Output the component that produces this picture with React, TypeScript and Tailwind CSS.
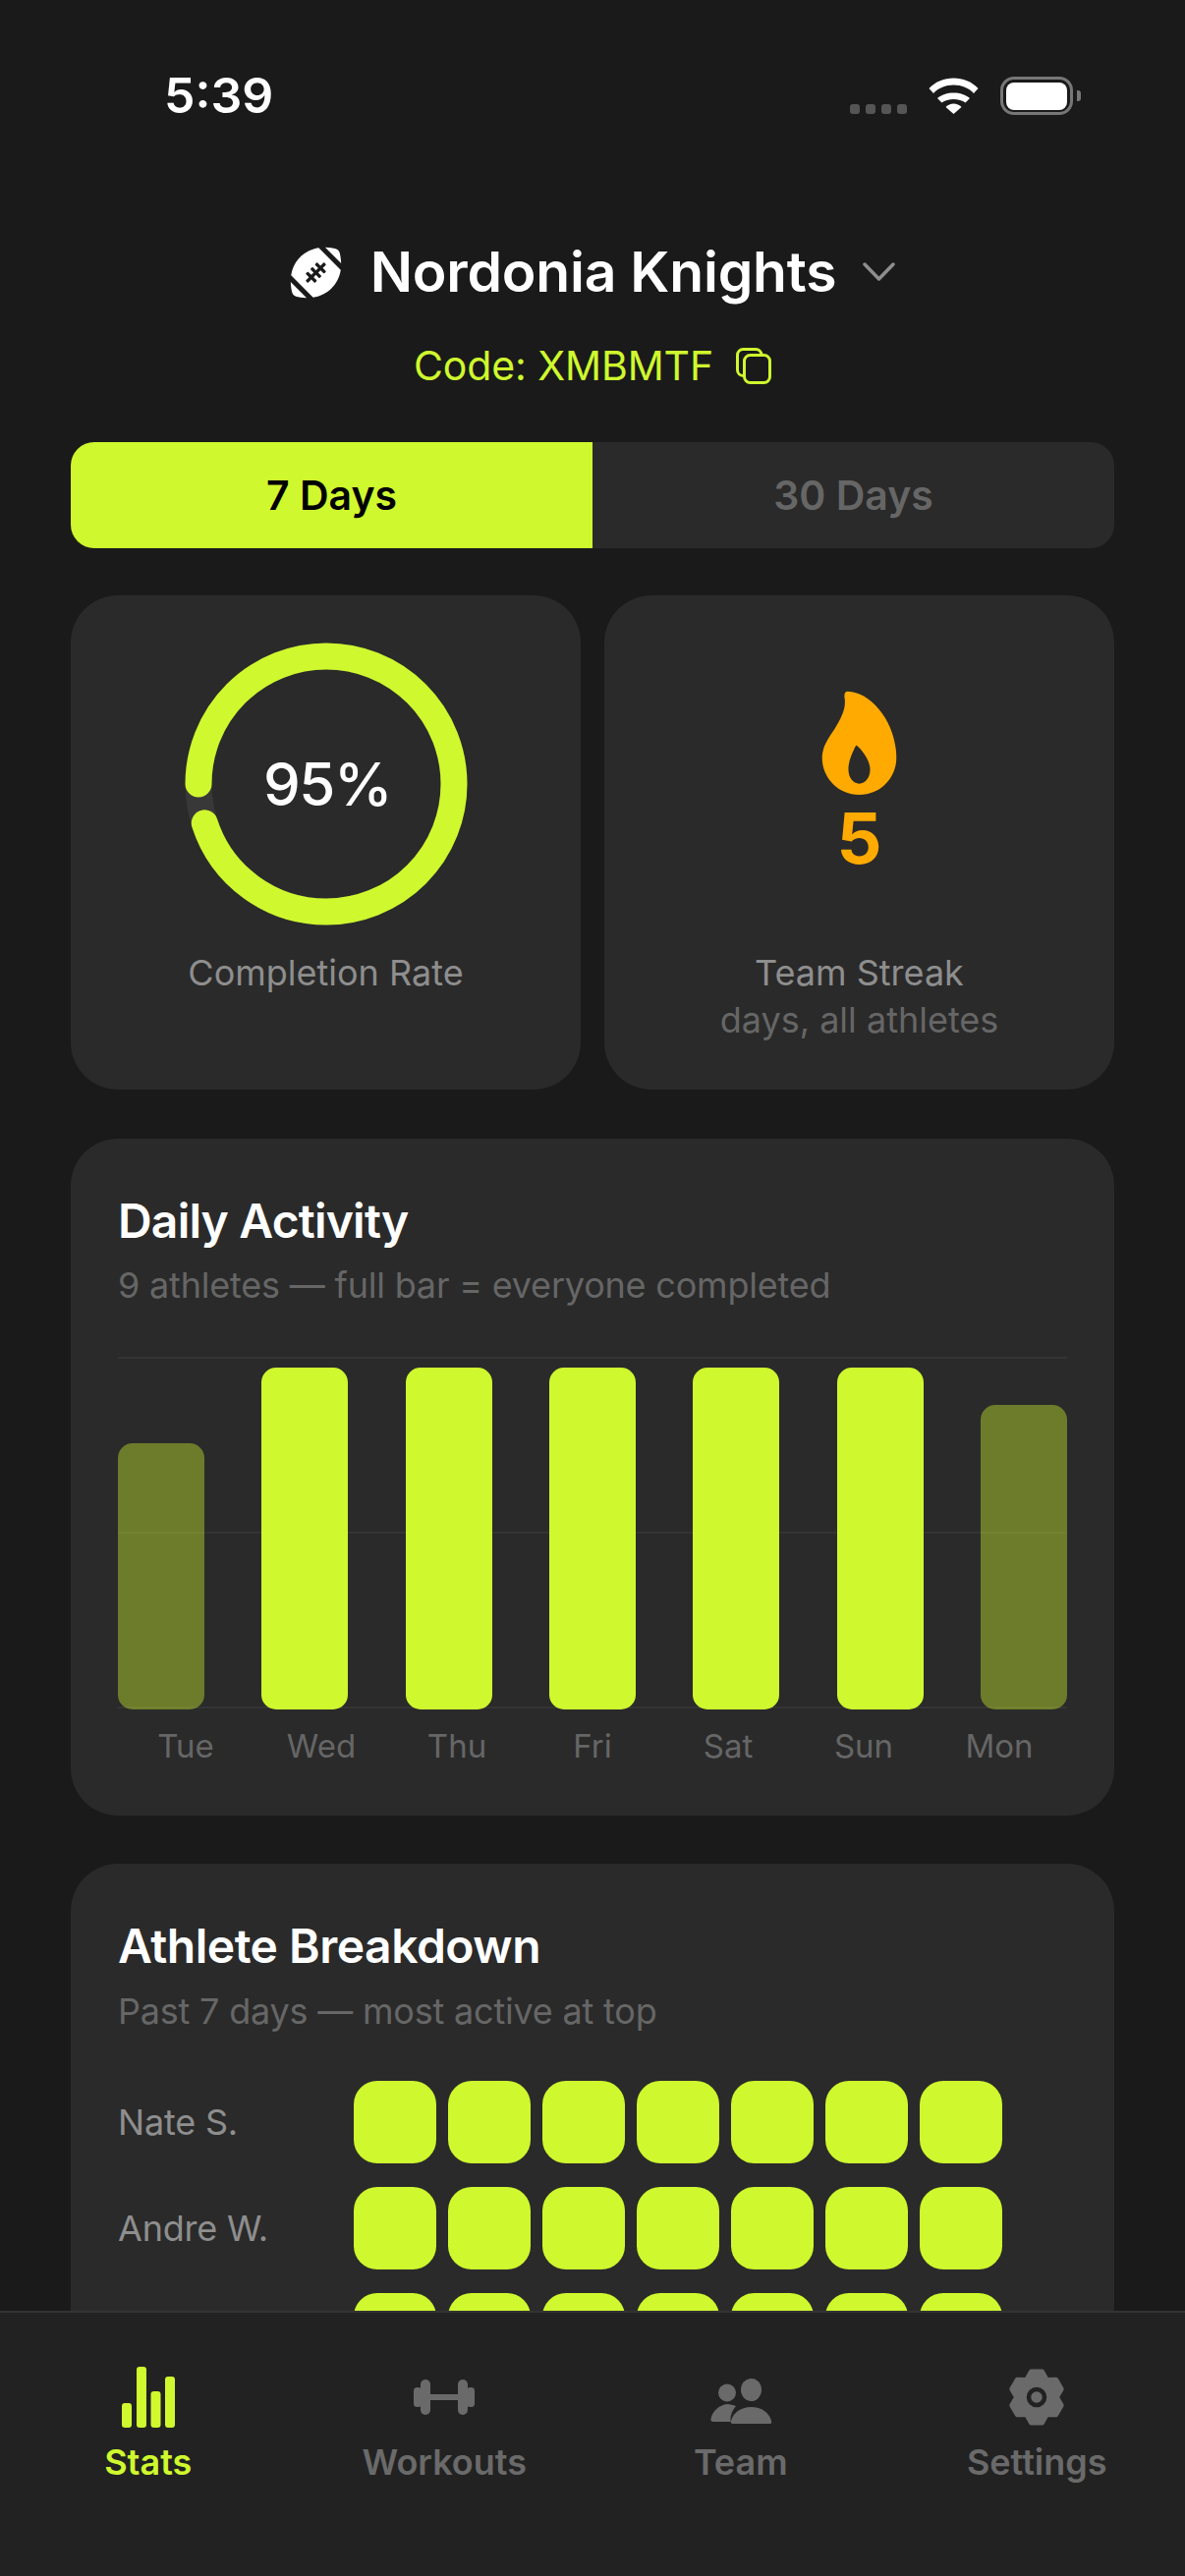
import { FaFootballBall } from 'react-icons/fa';

const days = ['Tue', 'Wed', 'Thu', 'Fri', 'Sat', 'Sun', 'Mon'];
const athletes = ['Nate S.', 'Andre W.', ''];

const gearPoints = Array.from({ length: 6 }).flatMap((_, i) => {
    const a = (i * 60 - 90) * (Math.PI / 180);
    const at = (r: number, d: number) => {
        const t = a + (d * Math.PI) / 180;
        return `${(30 + r * Math.cos(t)).toFixed(2)},${(30 + r * Math.sin(t)).toFixed(2)}`;
    };
    return [at(20.5, -29), at(26.5, -12), at(26.5, 12), at(20.5, 29)];
}).join(' ');

const StatusBar = () => (
    <div className="flex h-[195px] shrink-0 items-center justify-between pl-[167px] pr-[114px]">
        <span className="text-[50px] leading-[61px] font-semibold text-white">5:39</span>
        <div className="flex items-center">
            <div className="mt-[27px] flex gap-[6px]">
                {[0, 1, 2, 3].map((i) => (
                    <span key={i} className="h-[10px] w-[10px] rounded-[3px] bg-[#555555]" />
                ))}
            </div>
            <svg className="ml-[22px]" width="51" height="37" viewBox="0 0 51 37" fill="#ffffff">
                <path d="M0.5 11C7 4 16 0.5 25.5 0.5C35 0.5 44 4 50.5 11L46 16C41 10.5 33.5 7.5 25.5 7.5C17.5 7.5 10 10.5 5 16Z" />
                <path d="M9 21C13 17.5 19 15.5 25.5 15.5C32 15.5 38 17.5 42 21L37.5 25.5C34.5 23.5 30 22 25.5 22C21 22 16.5 23.5 13.5 25.5Z" />
                <path d="M17.5 30C19.5 28 22.5 26.5 25.5 26.5C28.5 26.5 31.5 28 33.5 30L25.5 37Z" />
            </svg>
            <div className="relative ml-[22px] flex h-[39px] w-[74px] items-center justify-center rounded-[14px] border-[3px] border-[#777777]">
                <div className="h-[28px] w-[62px] rounded-[8px] bg-white" />
                <div className="absolute right-[-11px] h-[11px] w-[4px] rounded-r-[3px] bg-[#777777]" />
            </div>
        </div>
    </div>
);

const CopyIcon = () => (
    <svg width="36" height="37" viewBox="0 0 36 37" fill="none" stroke="#cff82e" strokeWidth="3">
        <rect x="8.5" y="7.5" width="26" height="28" rx="6" />
        <path d="M8.5 28.5H7.5C4 28.5 1.5 26 1.5 22.5V7.5C1.5 4 4 1.5 7.5 1.5H20C23.5 1.5 26 4 26 7.5" />
    </svg>
);

const Ring = () => (
    <div className="relative h-[288px] w-[288px]">
        <svg width="288" height="288" viewBox="0 0 288 288" className="rotate-180">
            <circle cx="144" cy="144" r="130" fill="none" stroke="#383838" strokeWidth="27" />
            <circle
                cx="144"
                cy="144"
                r="130"
                fill="none"
                stroke="#cff82e"
                strokeWidth="27"
                strokeLinecap="round"
                strokeDasharray="776 817"
            />
        </svg>
        <div className="absolute inset-0 flex items-center justify-center pl-[3px] text-[60px] font-medium tracking-[-1.5px] text-white">95%</div>
    </div>
);

const Flame = () => (
    <svg width="77" height="107" viewBox="110 68 230 320" fill="#ffaa00">
        <path
            fillRule="evenodd"
            d="M190 70C180 70 178 80 181 95C184 125 170 150 150 185C130 215 112 240 112 272C112 335 163 385 225 385C288 385 338 335 338 272C338 165 262 72 190 70ZM215 235C222 235 258 275 258 308C258 333 243 351 225 351C207 351 192 333 192 308C192 280 207 250 215 235Z"
        />
    </svg>
);

const DailyActivity = () => (
    <section className="mt-[50px] h-[689px] shrink-0 rounded-[48px] bg-[#2a2a2a] px-[48px] pt-[54px]">
        <h2 className="text-[48px] leading-[60px] font-semibold tracking-[-0.8px] text-white">Daily Activity</h2>
        <p className="mt-[13px] text-[36px] leading-[44px] tracking-[-0.2px] text-[#666666]">9 athletes — full bar = everyone completed</p>
        <div className="relative mt-[51px] h-[359px]">
            <div className="absolute inset-x-0 top-0 flex h-[358px] flex-col justify-between">
                <div className="h-[2px] bg-[#343434]" />
                <div className="h-[2px] bg-[#343434]" />
                <div className="h-[2px] bg-[#343434]" />
            </div>
            <div className="absolute inset-x-0 bottom-0 flex h-[348px] items-end justify-between">
                {days.map((day, i) => (
                    <div
                        key={day}
                        className={
                            i === 0
                                ? 'h-[271px] w-[88px] rounded-[15px] bg-[#cff82e]/40'
                                : i === 6
                                  ? 'h-[310px] w-[88px] rounded-[15px] bg-[#cff82e]/40'
                                  : 'h-[348px] w-[88px] rounded-[15px] bg-[#cff82e]'
                        }
                    />
                ))}
            </div>
        </div>
        <div className="mt-[17px] flex">
            {days.map((day) => (
                <span key={day} className="flex-1 text-center text-[33px] leading-[40px] text-[#666666]">
                    {day}
                </span>
            ))}
        </div>
    </section>
);

const AthleteBreakdown = () => (
    <section className="mt-[49px] h-[800px] shrink-0 rounded-t-[48px] bg-[#2a2a2a] px-[48px] pt-[54px]">
        <h2 className="text-[48px] leading-[60px] font-semibold tracking-[-0.5px] text-white">Athlete Breakdown</h2>
        <p className="mt-[14px] text-[36px] leading-[44px] tracking-[-0.2px] text-[#666666]">Past 7 days — most active at top</p>
        <div className="mt-[49px] flex flex-col gap-[24px]">
            {athletes.map((name, row) => (
                <div key={row} className="flex items-center">
                    <span className="w-[240px] text-[36px] leading-[44px] tracking-[-0.2px] text-[#8e8e8e]">{name}</span>
                    <div className="flex gap-[12px]">
                        {days.map((day) => (
                            <div key={day} className="h-[84px] w-[84px] rounded-[24px] bg-[#cff82e]" />
                        ))}
                    </div>
                </div>
            ))}
        </div>
    </section>
);

const StatsIcon = () => (
    <svg width="54" height="62" viewBox="0 0 54 62" fill="#cff82e">
        <rect x="0" y="37" width="10" height="25" rx="3" />
        <rect x="15" y="0" width="10" height="62" rx="3" />
        <rect x="29.5" y="25" width="10" height="37" rx="3" />
        <rect x="44" y="10" width="10" height="52" rx="3" />
    </svg>
);

const DumbbellIcon = () => (
    <svg width="62" height="36" viewBox="0 0 62 36" fill="#6a6a6a">
        <rect x="0" y="8" width="8" height="20" rx="3.5" />
        <rect x="7" y="0" width="10" height="36" rx="5" />
        <rect x="16" y="15" width="30" height="6" />
        <rect x="45" y="0" width="10" height="36" rx="5" />
        <rect x="54" y="8" width="8" height="20" rx="3.5" />
    </svg>
);

const TeamIcon = () => (
    <svg width="62" height="46" viewBox="0 0 62 46" fill="#6a6a6a">
        <circle cx="17" cy="14.5" r="9" />
        <ellipse cx="41.5" cy="11.5" rx="10.5" ry="11.5" />
        <path d="M21 44H20C12 44 6 44 3 44C1 44 0 43 0.5 41C2 33 9 27 17 26C20 26 23 27 26 28C22.5 32 20.5 37 20.5 41C20.5 42.5 20.5 43.5 21 44Z" />
        <path d="M23 46C21 46 20.5 45 21 43C23 35 31 29 41.5 29C52 29 60 35 62 43C62.5 45 62 46 60 46Z" />
    </svg>
);

const GearIcon = () => (
    <svg width="60" height="60" viewBox="0 0 60 60">
        <polygon points={gearPoints} fill="#6a6a6a" stroke="#6a6a6a" strokeWidth="5" strokeLinejoin="round" />
        <circle cx="30" cy="30" r="8" fill="none" stroke="#222222" strokeWidth="4.5" />
    </svg>
);

const TabBar = () => (
    <nav className="grid h-[270px] shrink-0 grid-cols-4 border-t-[2px] border-[#333333] bg-[#222222] pt-[51px]">
        <div className="flex flex-col items-center">
            <div className="flex h-[70px] items-center"><StatsIcon /></div>
            <span className="mt-[9px] text-[36px] leading-[44px] font-semibold text-[#cff82e]">Stats</span>
        </div>
        <div className="flex flex-col items-center">
            <div className="flex h-[70px] items-center"><DumbbellIcon /></div>
            <span className="mt-[9px] text-[36px] leading-[44px] font-semibold text-[#6a6a6a]">Workouts</span>
        </div>
        <div className="flex flex-col items-center">
            <div className="flex h-[70px] items-center pt-[8px]"><TeamIcon /></div>
            <span className="mt-[9px] text-[36px] leading-[44px] font-semibold text-[#6a6a6a]">Team</span>
        </div>
        <div className="flex flex-col items-center">
            <div className="flex h-[70px] items-center"><GearIcon /></div>
            <span className="mt-[9px] text-[36px] leading-[44px] font-semibold text-[#6a6a6a]">Settings</span>
        </div>
    </nav>
);

const App = () => {
    return (
        <div className="flex h-[2622px] w-[1206px] flex-col overflow-hidden bg-[#1a1a1a] font-[Inter,sans-serif]">
            <main className="flex min-h-0 flex-1 flex-col overflow-hidden">
                <StatusBar />
                <div className="flex flex-col px-[72px]">
                    <div className="mt-[48px] flex h-[68px] items-center justify-center">
                        <FaFootballBall className="h-[53px] w-[53px] text-white" />
                        <h1 className="ml-[29px] text-[57px] leading-[68px] font-semibold tracking-[-0.2px] text-white">Nordonia Knights</h1>
                        <svg className="ml-[27px] mt-[-2px]" width="33" height="19" viewBox="0 0 33 19" fill="none" stroke="#8e8e8e" strokeWidth="3.5" strokeLinecap="round" strokeLinejoin="round">
                            <path d="M2 2L16.5 17L31 2" />
                        </svg>
                    </div>
                    <div className="mt-[39px] flex h-[44px] items-center justify-center gap-[23px]">
                        <span className="text-[41px] leading-[44px] tracking-[-0.1px] text-[#cff82e]">Code: XMBMTF</span>
                        <CopyIcon />
                    </div>
                    <div className="mt-[56px] grid h-[108px] grid-cols-2 overflow-hidden rounded-[24px] bg-[#2a2a2a]">
                        <div className="flex items-center justify-center bg-[#cff82e] pt-[2px] text-[41px] font-semibold text-black">7 Days</div>
                        <div className="flex items-center justify-center pt-[2px] text-[41px] font-semibold text-[#666666]">30 Days</div>
                    </div>
                    <div className="mt-[48px] grid h-[503px] grid-cols-2 gap-[24px]">
                        <div className="flex flex-col items-center rounded-[48px] bg-[#2a2a2a] pt-[48px]">
                            <Ring />
                            <span className="mt-[26px] text-[36px] leading-[44px] text-[#8e8e8e]">Completion Rate</span>
                        </div>
                        <div className="flex flex-col items-center rounded-[48px] bg-[#2a2a2a] pt-[97px]">
                            <Flame />
                            <span className="mt-[3px] text-[72px] leading-[80px] font-bold text-[#ffaa00]">5</span>
                            <span className="mt-[75px] text-[36px] leading-[44px] text-[#8e8e8e]">Team Streak</span>
                            <span className="mt-[4px] text-[36px] leading-[44px] text-[#666666]">days, all athletes</span>
                        </div>
                    </div>
                    <DailyActivity />
                    <AthleteBreakdown />
                </div>
            </main>
            <TabBar />
        </div>
    );
};

export default App;
